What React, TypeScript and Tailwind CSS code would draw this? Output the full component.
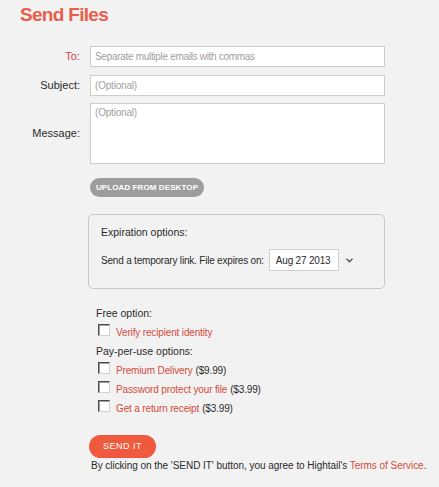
import React from "react";

function Check() {
  return (
    <span className="mt-[1px] ml-[2px] w-[12px] h-[12px] shrink-0 bg-white border border-t-[#4a4a4a] border-l-[#4a4a4a] border-r-[#d0d0d0] border-b-[#d0d0d0] shadow-[inset_1px_1px_0_#a0a0a0]" />
  );
}

function OptRow({ label, price }: { label: string; price?: string }) {
  return (
    <div className="flex items-start h-[19px] leading-[19px]">
      <Check />
      <span className="ml-[6px] text-[#d24b3c]">{label}</span>
      {price && <span className="ml-[3px] text-[#2b2b2b]">{price}</span>}
    </div>
  );
}

export default function App() {
  return (
    <div className="w-[439px] h-[487px] overflow-hidden bg-[#f2f2f2] font-['Liberation_Sans',Arial,sans-serif] text-[#2b2b2b]">
      <h1 className="pl-[20px] pt-[4px] text-[19px] leading-[22px] font-bold tracking-[-0.7px] text-[#e8604c]">
        Send Files
      </h1>

      <div className="mt-[20px] flex items-center">
        <label className="w-[80px] text-right text-[11px] text-[#c9473a]">To:</label>
        <input
          className="ml-[10px] w-[295px] h-[21px] bg-white border border-[#cdcdcd] px-[4px] text-[10px] tracking-[-0.3px] outline-none placeholder:text-[#a0a0a0]"
          placeholder="Separate multiple emails with commas"
        />
      </div>
      <div className="mt-[8px] flex items-center">
        <label className="w-[80px] text-right text-[11px]">Subject:</label>
        <input
          className="ml-[10px] w-[295px] h-[21px] bg-white border border-[#cdcdcd] px-[4px] text-[10px] tracking-[-0.2px] outline-none placeholder:text-[#a0a0a0]"
          placeholder="(Optional)"
        />
      </div>
      <div className="mt-[7px] flex items-center">
        <label className="w-[80px] text-right text-[11px]">Message:</label>
        <textarea
          className="ml-[10px] w-[295px] h-[61px] resize-none bg-white border border-[#cdcdcd] px-[4px] pt-[2px] text-[10px] leading-[13px] tracking-[-0.2px] outline-none placeholder:text-[#a0a0a0]"
          placeholder="(Optional)"
        />
      </div>

      <button className="ml-[90px] mt-[14px] flex items-center justify-center w-[114px] h-[19px] rounded-full bg-[#9d9d9d] text-white text-[8px] font-bold tracking-[0.1px]">
        UPLOAD FROM DESKTOP
      </button>

      <div className="ml-[88px] mt-[17px] w-[297px] h-[75px] border border-[#c9c9c9] rounded-[5px] pl-[12px] pt-[10px]">
        <div className="text-[10.5px] leading-[14px]">Expiration options:</div>
        <div className="mt-[10px] flex items-center h-[22px] text-[10px] tracking-[-0.2px]">
          <span>Send a temporary link. File expires on:</span>
          <div className="ml-[5px] w-[70px] h-[22px] bg-white border border-[#d0d0d0] pl-[6px] flex items-center">
            Aug 27 2013
          </div>
          <svg className="ml-[7px]" width="7" height="5" viewBox="0 0 7 5">
            <path d="M0.5 0.8 L3.5 3.8 L6.5 0.8" fill="none" stroke="#555" strokeWidth="1.4" />
          </svg>
        </div>
      </div>

      <div className="ml-[96px] mt-[14.5px] flex flex-col text-[10px] tracking-[-0.15px]">
        <div className="h-[19px] leading-[19px] text-[10.5px] tracking-normal">Free option:</div>
        <OptRow label="Verify recipient identity" />
        <div className="h-[19px] leading-[19px] text-[10.5px] tracking-normal">Pay-per-use options:</div>
        <OptRow label="Premium Delivery" price="($9.99)" />
        <OptRow label="Password protect your file" price="($3.99)" />
        <OptRow label="Get a return receipt" price="($3.99)" />
      </div>

      <button className="ml-[89px] mt-[17.5px] flex items-center justify-center w-[67px] h-[23px] rounded-full bg-[#ef5a3e] text-white text-[9px] tracking-[0.5px]">
        SEND IT
      </button>
      <div className="ml-[91px] mt-[1px] text-[10px] leading-[14px] tracking-[-0.04px] whitespace-nowrap">
        By clicking on the 'SEND IT' button, you agree to Hightail's{" "}
        <span className="text-[#d24b3c]">Terms of Service</span>.
      </div>
    </div>
  );
}
